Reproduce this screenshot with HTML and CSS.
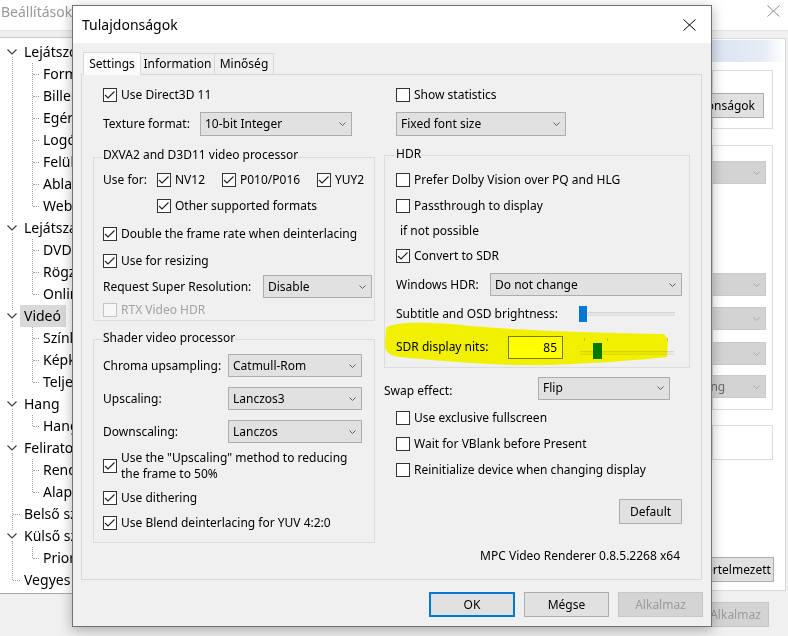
FILE: index.html
```html
<!DOCTYPE html>
<html lang="hu">
<head>
<meta charset="utf-8">
<title>Tulajdonságok</title>
<link rel="stylesheet" href="styles.css">
</head>
<body>
<div class="bgwin">
  <div class="bg-titlebar">
    <span class="bg-title">Beállítások</span>
    <svg class="bg-close" viewBox="0 0 13 12"><path d="M0.5 0.5L12.5 11.5M12.5 0.5L0.5 11.5"/></svg>
  </div>
  <div class="bg-main">
    <div class="tree">
      <ul class="t-root">
        <li class="t-node">
          <div class="t-row"><span class="t-ind"><svg class="t-chev" viewBox="0 0 10 10"><polyline points="0.5,2.5 5,7 9.5,2.5"/></svg></span><span class="t-label">Lejátszó</span></div>
          <ul class="t-kids">
            <li class="t-row"><span class="t-ind"><span class="hline"></span></span><span class="t-label">Formátumok</span></li>
            <li class="t-row"><span class="t-ind"><span class="hline"></span></span><span class="t-label">Billentyűk</span></li>
            <li class="t-row"><span class="t-ind"><span class="hline"></span></span><span class="t-label">Egér</span></li>
            <li class="t-row"><span class="t-ind"><span class="hline"></span></span><span class="t-label">Logó</span></li>
            <li class="t-row"><span class="t-ind"><span class="hline"></span></span><span class="t-label">Felület</span></li>
            <li class="t-row"><span class="t-ind"><span class="hline"></span></span><span class="t-label">Ablak</span></li>
            <li class="t-row"><span class="t-ind"><span class="hline"></span></span><span class="t-label">Webes felület</span></li>
          </ul>
        </li>
        <li class="t-node">
          <div class="t-row"><span class="t-ind"><svg class="t-chev" viewBox="0 0 10 10"><polyline points="0.5,2.5 5,7 9.5,2.5"/></svg></span><span class="t-label">Lejátszás</span></div>
          <ul class="t-kids">
            <li class="t-row"><span class="t-ind"><span class="hline"></span></span><span class="t-label">DVD/OGM</span></li>
            <li class="t-row"><span class="t-ind"><span class="hline"></span></span><span class="t-label">Rögzítés</span></li>
            <li class="t-row"><span class="t-ind"><span class="hline"></span></span><span class="t-label">Online szolgáltatások</span></li>
          </ul>
        </li>
        <li class="t-node sel">
          <div class="t-row"><span class="t-ind"><svg class="t-chev" viewBox="0 0 10 10"><polyline points="0.5,2.5 5,7 9.5,2.5"/></svg></span><span class="t-label">Videó</span></div>
          <ul class="t-kids">
            <li class="t-row"><span class="t-ind"><span class="hline"></span></span><span class="t-label">Színkezelés</span></li>
            <li class="t-row"><span class="t-ind"><span class="hline"></span></span><span class="t-label">Képkockák</span></li>
            <li class="t-row"><span class="t-ind"><span class="hline"></span></span><span class="t-label">Teljes képernyő</span></li>
          </ul>
        </li>
        <li class="t-node">
          <div class="t-row"><span class="t-ind"><svg class="t-chev" viewBox="0 0 10 10"><polyline points="0.5,2.5 5,7 9.5,2.5"/></svg></span><span class="t-label">Hang</span></div>
          <ul class="t-kids">
            <li class="t-row"><span class="t-ind"><span class="hline"></span></span><span class="t-label">Hangkapcsoló</span></li>
          </ul>
        </li>
        <li class="t-node">
          <div class="t-row"><span class="t-ind"><svg class="t-chev" viewBox="0 0 10 10"><polyline points="0.5,2.5 5,7 9.5,2.5"/></svg></span><span class="t-label">Feliratok</span></div>
          <ul class="t-kids">
            <li class="t-row"><span class="t-ind"><span class="hline"></span></span><span class="t-label">Renderelő</span></li>
            <li class="t-row"><span class="t-ind"><span class="hline"></span></span><span class="t-label">Alapértelmezett stílus</span></li>
          </ul>
        </li>
        <li class="t-node">
          <div class="t-row"><span class="t-ind"><span class="hline"></span></span><span class="t-label">Belső szűrők</span></div>
        </li>
        <li class="t-node">
          <div class="t-row"><span class="t-ind"><svg class="t-chev" viewBox="0 0 10 10"><polyline points="0.5,2.5 5,7 9.5,2.5"/></svg></span><span class="t-label">Külső szűrők</span></div>
          <ul class="t-kids">
            <li class="t-row"><span class="t-ind"><span class="hline"></span></span><span class="t-label">Prioritás</span></li>
          </ul>
        </li>
        <li class="t-node">
          <div class="t-row"><span class="t-ind"><span class="hline"></span></span><span class="t-label">Vegyes</span></div>
        </li>
      </ul>
    </div>
    <div class="page">
      <div class="page-head"></div>
      <div class="pbox pbox1"><button class="btn w100">Tulajdonságok</button></div>
      <div class="pbox pbox2">
        <div class="dcombo"><span></span><svg class="chev" viewBox="0 0 7 4"><polyline points="0.5,0.5 3.5,3.5 6.5,0.5"/></svg></div>
        <div class="dcombo dc2"><span></span><svg class="chev" viewBox="0 0 7 4"><polyline points="0.5,0.5 3.5,3.5 6.5,0.5"/></svg></div>
        <div class="dcombo dc3"><span></span><svg class="chev" viewBox="0 0 7 4"><polyline points="0.5,0.5 3.5,3.5 6.5,0.5"/></svg></div>
        <div class="dcombo dc4"><span></span><svg class="chev" viewBox="0 0 7 4"><polyline points="0.5,0.5 3.5,3.5 6.5,0.5"/></svg></div>
        <div class="dcombo dc5"><span>Dithering</span><svg class="chev" viewBox="0 0 7 4"><polyline points="0.5,0.5 3.5,3.5 6.5,0.5"/></svg></div>
      </div>
      <div class="pbox pbox3"></div>
      <div class="page-foot"><button class="btn w96">Alapértelmezett</button></div>
    </div>
  </div>
  <div class="bg-buttons">
    <button class="btn"></button>
    <button class="btn"></button>
    <button class="btn dis w67">Alkalmaz</button>
  </div>
</div>

<div class="dialog">
  <div class="dlg-title">
    <span>Tulajdonságok</span>
    <svg class="dlg-close" viewBox="0 0 13 12"><path d="M0.5 0.5L12.5 11.5M12.5 0.5L0.5 11.5"/></svg>
  </div>
  <div class="dlg-client">
    <div class="tabs">
      <div class="tab active t-set">Settings</div>
      <div class="tab t-info">Information</div>
      <div class="tab t-min">Minőség</div>
    </div>
    <div class="tabpanel">
      <div class="col">
        <div class="row h28 ind10"><span class="chk"><span class="box"><svg viewBox="0 0 12 12"><polyline points="1,6 4,9 10.5,2.5"/></svg></span>Use Direct3D 11</span></div>
        <div class="row h30 ind10"><span class="lbl w97">Texture format:</span><div class="combo w152 tall"><span>10-bit Integer</span><svg class="chev" viewBox="0 0 7 4"><polyline points="0.5,0.5 3.5,3.5 6.5,0.5"/></svg></div></div>
        <fieldset class="group">
          <legend>DXVA2 and D3D11 video processor</legend>
          <div class="row h26"><span class="lbl w54">Use for:</span><span class="chk w65"><span class="box"><svg viewBox="0 0 12 12"><polyline points="1,6 4,9 10.5,2.5"/></svg></span>NV12</span><span class="chk w95"><span class="box"><svg viewBox="0 0 12 12"><polyline points="1,6 4,9 10.5,2.5"/></svg></span>P010/P016</span><span class="chk"><span class="box"><svg viewBox="0 0 12 12"><polyline points="1,6 4,9 10.5,2.5"/></svg></span>YUY2</span></div>
          <div class="row h26 ind54"><span class="chk"><span class="box"><svg viewBox="0 0 12 12"><polyline points="1,6 4,9 10.5,2.5"/></svg></span>Other supported formats</span></div>
          <div class="row h29"><span class="chk"><span class="box"><svg viewBox="0 0 12 12"><polyline points="1,6 4,9 10.5,2.5"/></svg></span>Double the frame rate when deinterlacing</span></div>
          <div class="row h26"><span class="chk"><span class="box"><svg viewBox="0 0 12 12"><polyline points="1,6 4,9 10.5,2.5"/></svg></span>Use for resizing</span></div>
          <div class="row h25"><span class="lbl w160">Request Super Resolution:</span><div class="combo w109"><span>Disable</span><svg class="chev" viewBox="0 0 7 4"><polyline points="0.5,0.5 3.5,3.5 6.5,0.5"/></svg></div></div>
          <div class="row h21"><span class="chk dis"><span class="box"></span>RTX Video HDR</span></div>
        </fieldset>
        <fieldset class="group g-shader">
          <legend>Shader video processor</legend>
          <div class="row h33"><span class="lbl w125">Chroma upsampling:</span><div class="combo w134"><span>Catmull-Rom</span><svg class="chev" viewBox="0 0 7 4"><polyline points="0.5,0.5 3.5,3.5 6.5,0.5"/></svg></div></div>
          <div class="row h33"><span class="lbl w125">Upscaling:</span><div class="combo w134"><span>Lanczos3</span><svg class="chev" viewBox="0 0 7 4"><polyline points="0.5,0.5 3.5,3.5 6.5,0.5"/></svg></div></div>
          <div class="row h33"><span class="lbl w125">Downscaling:</span><div class="combo w134"><span>Lanczos</span><svg class="chev" viewBox="0 0 7 4"><polyline points="0.5,0.5 3.5,3.5 6.5,0.5"/></svg></div></div>
          <div class="row h32 mt2"><span class="chk"><span class="box"><svg viewBox="0 0 12 12"><polyline points="1,6 4,9 10.5,2.5"/></svg></span><span class="two">Use the "Upscaling" method to reducing<br>the frame to 50%</span></span></div>
          <div class="row h24 mt4"><span class="chk"><span class="box"><svg viewBox="0 0 12 12"><polyline points="1,6 4,9 10.5,2.5"/></svg></span>Use dithering</span></div>
          <div class="row h26"><span class="chk"><span class="box"><svg viewBox="0 0 12 12"><polyline points="1,6 4,9 10.5,2.5"/></svg></span>Use Blend deinterlacing for YUV 4:2:0</span></div>
        </fieldset>
      </div>

      <div class="col">
        <div class="row h28 ind12"><span class="chk"><span class="box"></span>Show statistics</span></div>
        <div class="row h30 ind12"><div class="combo w170 tall"><span>Fixed font size</span><svg class="chev" viewBox="0 0 7 4"><polyline points="0.5,0.5 3.5,3.5 6.5,0.5"/></svg></div></div>
        <fieldset class="group g-hdr">
          <legend>HDR</legend>
          <div class="row h26"><span class="chk"><span class="box"></span>Prefer Dolby Vision over PQ and HLG</span></div>
          <div class="row h26"><span class="chk"><span class="box"></span>Passthrough to display</span></div>
          <div class="row h24 ind4">if not possible</div>
          <div class="row h26"><span class="chk"><span class="box"><svg viewBox="0 0 12 12"><polyline points="1,6 4,9 10.5,2.5"/></svg></span>Convert to SDR</span></div>
          <div class="row h31"><span class="lbl w94">Windows HDR:</span><div class="combo w192"><span>Do not change</span><svg class="chev" viewBox="0 0 7 4"><polyline points="0.5,0.5 3.5,3.5 6.5,0.5"/></svg></div></div>
          <div class="row h28"><span class="lbl w183">Subtitle and OSD brightness:</span>
            <div class="slider s-osd"><div class="track"></div><div class="thumb" style="left:0px"></div></div>
          </div>
          <div class="row h38"><span class="lbl w112">SDR display nits:</span><div class="edit">85</div>
            <div class="slider s-nits"><span class="tick" style="left:4px"></span><span class="tick" style="left:27px"></span><span class="tick" style="left:87px"></span><div class="track"></div><div class="thumb" style="left:13px"></div></div>
          </div>
        </fieldset>
        <div class="row h28 mt6"><span class="lbl w154 low">Swap effect:</span><div class="combo w132"><span>Flip</span><svg class="chev" viewBox="0 0 7 4"><polyline points="0.5,0.5 3.5,3.5 6.5,0.5"/></svg></div></div>
        <div class="row h26 mt3 ind12"><span class="chk"><span class="box"></span>Use exclusive fullscreen</span></div>
        <div class="row h26 ind12"><span class="chk"><span class="box"></span>Wait for VBlank before Present</span></div>
        <div class="row h26 ind12"><span class="chk"><span class="box"></span>Reinitialize device when changing display</span></div>
        <div class="row h25 mt16 end8"><button class="btn w63">Default</button></div>
        <div class="version">MPC Video Renderer 0.8.5.2268 x64</div>
      </div>
    </div>
    <div class="dlg-buttons">
      <button class="btn def">OK</button>
      <button class="btn">Mégse</button>
      <button class="btn dis">Alkalmaz</button>
    </div>
  </div>
</div>

<svg class="marker" viewBox="0 0 788 636"><path d="M386 328 C 395 321, 430 322, 470 326 C 530 331, 600 333, 664 334 L 668 340 L 667 357 C 640 360, 600 363, 550 365 C 500 366, 440 361, 400 357 C 390 356, 385 352, 385 345 Z"/></svg>
</body>
</html>
```

FILE: styles.css
```css
* { box-sizing: border-box; }
html, body { margin: 0; padding: 0; }
body {
  width: 788px; height: 636px; overflow: hidden; position: relative;
  background: #f0f0f0;
  font-family: "Noto Sans", "Open Sans", "DejaVu Sans", sans-serif;
  font-size: 12px; line-height: 16px; color: #000;
}
ul { list-style: none; margin: 0; padding: 0; }
button { font: inherit; color: inherit; margin: 0; }

/* ---------- background settings window ---------- */
.bgwin { position: absolute; left: 0; top: 0; width: 788px; height: 636px; background: #f0f0f0; }
.bg-titlebar {
  height: 31px; background: #fff; border-bottom: 1px solid #e4e4e4;
  display: flex; justify-content: space-between; align-items: flex-start;
}
.bg-title { font-size: 14px; line-height: 18px; color: #9a9a9a; padding: 3px 0 0 1px; white-space: nowrap; }
.bg-close { width: 13px; height: 12px; margin: 5px 8px 0 0; fill: none; stroke: #8c8c8c; stroke-width: 1; }
.bg-main { display: flex; margin-top: 6px; height: 557px; }

/* the tree is only visible left of the dialog */
.tree {
  width: 72px; flex: none; overflow: hidden; background: #fff;
  border-top: 1px solid #c8c8c8; border-bottom: 1px solid #a8a8a8;
  padding-top: 3px; font-size: 14px;
}
.t-root { position: relative; }
.t-root::before {
  content: ""; position: absolute; left: 12px; top: 11px; bottom: 11px;
  border-left: 1px dotted #a0a0a0;
}
.t-kids { position: relative; }
.t-kids::before {
  content: ""; position: absolute; left: 32px; top: 0; bottom: 11px;
  border-left: 1px dotted #a0a0a0;
}
.t-row { display: flex; align-items: center; height: 22px; white-space: nowrap; }
.t-ind { width: 20px; height: 22px; flex: none; display: flex; align-items: center; }
.t-kids .t-ind { width: 39px; }
.t-chev {
  width: 10px; height: 10px; margin-left: 7px; background: #fff;
  position: relative; z-index: 1;
  fill: none; stroke: #3a3a3a; stroke-width: 1.1;
}
.hline { height: 0; width: 8px; margin-left: 13px; border-top: 1px dotted #a0a0a0; }
.t-kids .hline { width: 6px; margin-left: 33px; }
.t-label { padding: 0 5px 0 4px; line-height: 22px; flex: none; }
.t-node.sel > .t-row .t-label { background: #d9d9d9; }

/* property page, only its right edge shows right of the dialog */
.page {
  width: 75px; margin: 1px 0 0 639px; height: 553px; overflow: hidden;
  background: #fff; border: 1px solid #d9d9d9; padding-right: 12px;
}
.page-head {
  height: 22px; margin: 1px -12px 0 0;
  background: linear-gradient(to right, #dbe4f1 0%, #e6ecf6 70%, #ffffff 100%);
}
.pbox { border: 1px solid #dcdcdc; }
.pbox1 { margin-top: 8px; height: 59px; display: flex; justify-content: flex-end; padding: 22px 8px 0 0; }
.pbox2 {
  margin-top: 16px; height: 265px; padding: 15px 6px 0 0;
  display: flex; flex-direction: column; align-items: flex-end;
}
.dcombo {
  width: 99px; height: 23px; flex: none; background: #d3d3d3; border: 1px solid #cacaca;
  display: flex; align-items: center; justify-content: space-between;
  padding: 0 5px 0 4px; color: #6d6d6d; white-space: nowrap;
}
.dcombo .chev { stroke: #a8a8a8; }
.dc2 { margin-top: 89px; }
.dc3 { margin-top: 11px; }
.dc4 { margin-top: 12px; }
.dc5 { margin-top: 10px; }
.pbox3 { margin-top: 15px; height: 35px; }
.page-foot { margin-top: 97px; display: flex; justify-content: flex-end; margin-right: -1px; }
.page .btn { flex: none; }
.bg-buttons { display: flex; justify-content: flex-end; gap: 10px; padding-right: 19px; margin-top: 8px; }

/* ---------- buttons ---------- */
.btn {
  height: 25px; width: 85px; padding: 0;
  background: #e1e1e1; border: 1px solid #adadad; color: #000;
  line-height: 16px; white-space: nowrap; overflow: hidden;
}
.btn.def { width: 86px; border: 2px solid #0078d7; }
.btn.dis { background: #d4d4d4; border-color: #c6c6c6; color: #9b9b9b; }
.w100 { width: 100px; }
.w96 { width: 96px; }
.w67 { width: 67px; }
.w63 { width: 63px; }

/* ---------- dialog ---------- */
.dialog {
  position: absolute; left: 72px; top: 5px; width: 640px; height: 622px;
  border: 1px solid #727272; background: #f0f0f0;
  box-shadow: 0 3px 12px rgba(0, 0, 0, 0.3);
  display: flex; flex-direction: column;
}
.dlg-title {
  height: 37px; flex: none; background: #fff;
  display: flex; align-items: center; justify-content: space-between;
  padding: 0 15px 0 9px; font-size: 14px; line-height: 18px;
}
.dlg-close { width: 13px; height: 12px; fill: none; stroke: #000; stroke-width: 1; }
.dlg-client { flex: 1; padding: 9px 8px 0 8px; display: flex; flex-direction: column; }

.tabs { display: flex; align-items: flex-end; height: 23px; margin: 0 0 -1px 2px; }
.tab {
  height: 22px; line-height: 20px; padding: 0; text-align: center;
  border: 1px solid #d9d9d9; border-bottom: 0; background: #f0f0f0;
  margin-left: -1px; white-space: nowrap; overflow: hidden;
}
.tab.active {
  height: 23px; line-height: 21px; margin-left: 0;
  background: #fbfbfb; position: relative; z-index: 1;
}
.t-set { width: 58px; }
.t-info { width: 75px; }
.t-min { width: 60px; }
.tabpanel {
  height: 506px; margin-right: 1px; border: 1px solid #d9d9d9;
  padding: 6px 11px 0;
  display: grid; grid-template-columns: 282px 306px; column-gap: 9px; align-items: start;
}
.dlg-buttons { display: flex; justify-content: flex-end; gap: 9px; margin-top: 12px; }

/* ---------- form rows ---------- */
.col { display: flex; flex-direction: column; }
.row { display: flex; align-items: center; flex: none; white-space: nowrap; }
.h21 { height: 21px; } .h24 { height: 24px; } .h25 { height: 25px; } .h26 { height: 26px; }
.h28 { height: 28px; } .h29 { height: 29px; } .h30 { height: 30px; } .h31 { height: 31px; }
.h32 { height: 32px; } .h33 { height: 33px; } .h38 { height: 38px; }
.mt2 { margin-top: 2px; } .mt3 { margin-top: 3px; } .mt4 { margin-top: 4px; }
.mt6 { margin-top: 6px; } .mt16 { margin-top: 16px; }
.ind4 { padding-left: 4px; } .ind10 { padding-left: 10px; } .ind12 { padding-left: 12px; }
.ind54 { padding-left: 54px; }
.end8 { justify-content: flex-end; padding-right: 8px; }

.lbl { flex: none; }
.lbl.low { padding-top: 5px; }
.w54 { width: 54px; } .w94 { width: 94px; } .w97 { width: 97px; } .w112 { width: 112px; }
.w125 { width: 125px; } .w154 { width: 154px; } .w160 { width: 160px; } .w183 { width: 183px; }

.chk { display: inline-flex; align-items: center; flex: none; }
.chk.w65 { width: 65px; }
.chk.w95 { width: 95px; }
.box {
  width: 14px; height: 14px; flex: none; margin-right: 4px;
  border: 1px solid #333; background: #fff; display: flex;
}
.box svg { width: 12px; height: 12px; fill: none; stroke: #1e1e1e; stroke-width: 1.1; }
.chk.dis { color: #a3a3a3; }
.chk.dis .box { border-color: #c4c4c4; background: #f7f7f7; }
.two { white-space: nowrap; line-height: 16px; }

.combo {
  height: 23px; flex: none;
  background: #e1e1e1; border: 1px solid #adadad;
  display: flex; align-items: center; justify-content: space-between;
  padding: 0 5px 0 4px;
}
.combo.tall { height: 24px; }
.w109 { width: 109px; } .w132 { width: 132px; } .w134 { width: 134px; }
.w152 { width: 152px; } .w170 { width: 170px; } .w192 { width: 192px; }
.chev { width: 7px; height: 4px; fill: none; stroke: #5c5c5c; stroke-width: 1; flex: none; }

.group {
  border: 1px solid #dcdcdc; margin: 8px 0 0; padding: 0 2px 0 9px;
  min-width: 0; min-inline-size: 0;
}
.group legend { padding: 0 0 4px; margin: 0; line-height: 16px; }
.g-shader { margin-top: 9px; padding-bottom: 6px; }
.g-shader legend { padding-bottom: 3px; }
.g-hdr { margin-top: 7px; padding: 3px 7px 1px 11px; }
.g-hdr legend { padding-bottom: 2px; }

.edit {
  width: 55px; height: 23px; flex: none;
  background: #fff; border: 1px solid #7a7a7a;
  text-align: right; padding-right: 5px; line-height: 21px;
}

.slider { position: relative; flex: none; }
.s-osd { width: 97px; height: 16px; }
.s-osd .track { left: 0; right: 1px; top: 6px; }
.s-nits { width: 94px; height: 24px; margin-left: 17px; }
.s-nits .track { left: 0; right: 0; top: 16px; }
.track {
  position: absolute; height: 4px;
  background: #e7e7e7; border-top: 1px solid #d4d4d4; border-bottom: 1px solid #dedede;
}
.thumb { position: absolute; width: 8px; height: 16px; background: #0078d7; }
.s-osd .thumb { top: 0; }
.s-nits .thumb { top: 8px; width: 9px; }
.tick { position: absolute; top: 3px; width: 1px; height: 3px; background: #c4c4c4; }

.version { margin-top: 24px; text-align: right; padding-right: 10px; white-space: nowrap; }

/* marker highlight drawn over the screenshot */
.marker {
  position: absolute; left: 0; top: 0; width: 788px; height: 636px;
  pointer-events: none; mix-blend-mode: multiply;
}
.marker path { fill: #ffff00; }
```
